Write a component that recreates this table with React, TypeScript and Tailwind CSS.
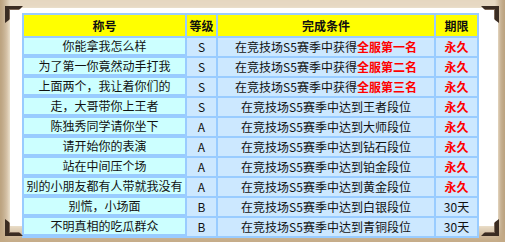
import React from "react"

interface Row {
    title: string
    level: string
    cond: string
    hi?: string // red part at the end of condition
    limit: string
}

const rows: Row[] = [
    { title: '你能拿我怎么样', level: 'S', cond: '在竞技场S5赛季中获得', hi: '全服第一名', limit: '永久' },
    { title: '为了第一你竟然动手打我', level: 'S', cond: '在竞技场S5赛季中获得', hi: '全服第二名', limit: '永久' },
    { title: '上面两个，我让着你们的', level: 'S', cond: '在竞技场S5赛季中获得', hi: '全服第三名', limit: '永久' },
    { title: '走，大哥带你上王者', level: 'S', cond: '在竞技场S5赛季中达到王者段位', limit: '永久' },
    { title: '陈独秀同学请你坐下', level: 'A', cond: '在竞技场S5赛季中达到大师段位', limit: '永久' },
    { title: '请开始你的表演', level: 'A', cond: '在竞技场S5赛季中达到钻石段位', limit: '永久' },
    { title: '站在中间压个场', level: 'A', cond: '在竞技场S5赛季中达到铂金段位', limit: '永久' },
    { title: '别的小朋友都有人带就我没有', level: 'A', cond: '在竞技场S5赛季中达到黄金段位', limit: '永久' },
    { title: '别慌，小场面', level: 'B', cond: '在竞技场S5赛季中达到白银段位', limit: '30天' },
    { title: '不明真相的吃瓜群众', level: 'B', cond: '在竞技场S5赛季中达到青铜段位', limit: '30天' },
]

// dark corner bracket of the parchment frame
function Corner({ className }: { className: string }) {
    return (
        <svg className={`absolute ${className}`} width="18" height="17" viewBox="0 0 18 17">
            <path d="M0 0 H18 L15 3 H4 V14 L0 17 Z" fill="#3a2c22" />
            <path d="M4 3 H15 L14 4 H5 V13 L4 14 Z" fill="#7a6656" />
        </svg>
    )
}

export default function App() {
    const cell = "flex items-center justify-center whitespace-nowrap"
    return (
        <div className="relative w-[505px] h-[242px] overflow-hidden bg-[#d6c2a2] bg-[linear-gradient(90deg,#b59c7a_0%,#e6d8c2_2%,#e6d8c2_98%,#b59c7a_100%)] pt-[8px] pl-[10px] pr-[7px] pb-[16px] shadow-[inset_0_-8px_10px_#c4aa86] font-['Noto_Sans_CJK_SC','Noto_Sans',sans-serif] text-[12px] text-[#111]">
            <div className="h-full bg-white shadow-[0_0_3px_#efe6d6] pt-[5px] pl-[12px] pr-[19px]">
                <div className="grid grid-cols-[161px_29px_216px_41px] gap-[2px] p-[2px] bg-[#99ccff] w-[457px]">
                    <div className={`${cell} h-[21px] bg-[#ffff00] font-bold`}>称号</div>
                    <div className={`${cell} bg-[#ffff00] font-bold`}>等级</div>
                    <div className={`${cell} bg-[#ffff00] font-bold`}>完成条件</div>
                    <div className={`${cell} bg-[#ffff00] font-bold`}>期限</div>
                    {rows.map((r, i) => (
                        <React.Fragment key={i}>
                            <div className={`${cell} h-[16px] bg-[#ccffff]`}>{r.title}</div>
                            <div className={`${cell} bg-[#cce8ff]`}>{r.level}</div>
                            <div className={`${cell} bg-[#cce8ff]`}>
                                {r.cond}
                                {r.hi && <span className="text-[#ff0000] font-bold">{r.hi}</span>}
                            </div>
                            <div className={`${cell} bg-[#cce8ff] ${r.limit === '永久' ? 'text-[#ff0000] font-bold' : ''}`}>{r.limit}</div>
                        </React.Fragment>
                    ))}
                </div>
            </div>
            <Corner className="left-[5px] top-[6px]" />
            <Corner className="right-[6px] top-[6px] -scale-x-100" />
            <Corner className="left-[5px] bottom-[6px] -scale-y-100" />
            <Corner className="right-[6px] bottom-[6px] -scale-100" />
        </div>
    )
}
